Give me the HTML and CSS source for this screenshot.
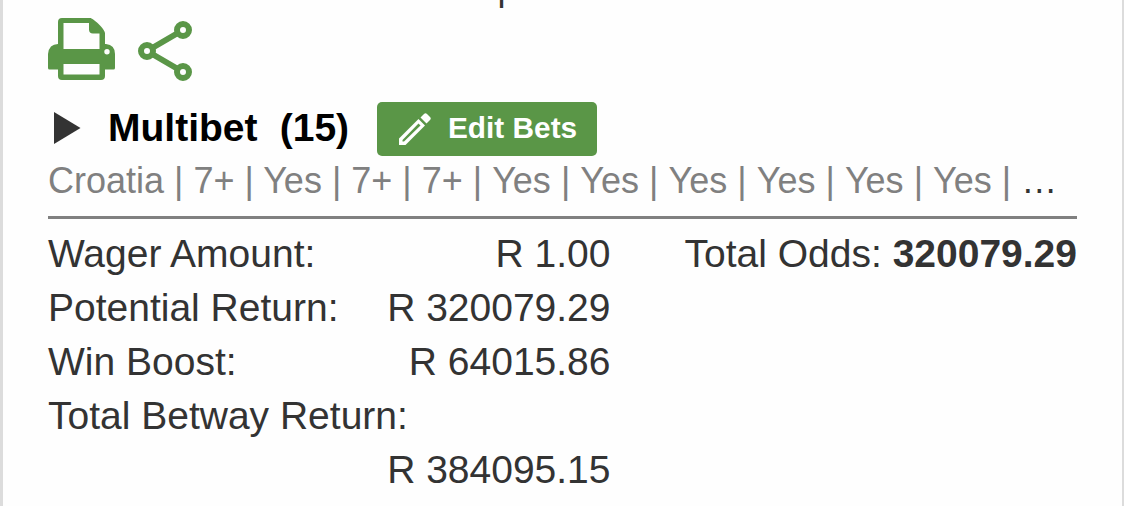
FILE: index.html
```html
<!DOCTYPE html>
<html lang="en">
<head>
    <meta charset="UTF-8">
    <meta name="viewport" content="width=device-width, initial-scale=1.0">
    <title>Bet Summary</title>
    <link rel="stylesheet" href="styles.css">
</head>
<body>
    <div class="bet-card">
        <div class="notice">Bonus on the next 15 Masterplan Win Boosted</div>

        <div class="actions">
            <svg class="print-icon" viewBox="0 0 67 62" width="67" height="62">
                <path fill="#5a9647" fill-rule="evenodd" d="M13 0H42C45 0 57 11 57 15V26H58Q67 27 67 36V50Q67 51.500 65.500 51.500H57V58Q57 62 53 62H14Q10 62 10 58V51.500H1.500Q0 51.500 0 50V36Q1 26 10 26V4Q10 0 14 0ZM15.500 5V31H51.500V15.500H45Q41 15.500 41 11.500V5ZM15.500 46V56.500H51.500V46ZM59 31A2.700 2.700 0 1 0 59 36.400A2.700 2.700 0 1 0 59 31Z"/>
            </svg>
            <svg class="share-icon" viewBox="0 0 54 60" width="54" height="60">
                <g fill="none" stroke="#5a9647" stroke-width="6">
                    <path d="M39 12.500L15 26.500M15 33.500L39 47.500"/>
                    <circle cx="45" cy="9" r="6"/>
                    <circle cx="9" cy="30" r="6"/>
                    <circle cx="45" cy="51" r="6"/>
                </g>
            </svg>
        </div>

        <div class="bet-header">
            <svg class="arrow" viewBox="0 0 27 32" width="27" height="32">
                <path fill="#333" d="M0 0L26.500 16L0 32Z"/>
            </svg>
            <h2>Multibet&nbsp; (15)</h2>
            <button class="edit-btn">
                <svg viewBox="0 0 32 32" width="32" height="32">
                    <path fill="#fff" fill-rule="evenodd" d="M0 25.500L19.500 6L26 12.500L6.500 32H0ZM3.500 27V28.500H5L21.500 12.500L19.500 10.500Z"/>
                    <path fill="#fff" d="M21.500 4.500L25 1Q26.500-.5 28 1L31 4Q32.500 5.500 31 7L27.500 10.500Z"/>
                </svg>
                <span>Edit Bets</span>
            </button>
        </div>

        <div class="selections">Croatia | 7+ | Yes | 7+ | 7+ | <span>Yes</span> | <span>Yes</span> | <span>Yes</span> | <span>Yes</span> | <span>Yes</span> | <span>Yes</span> | <span class="more">…</span></div>

        <div class="summary">
            <div class="amounts">
                <div class="row"><span>Wager Amount:</span><span>R 1.00</span></div>
                <div class="row"><span>Potential Return:</span><span>R 320079.29</span></div>
                <div class="row"><span>Win Boost:</span><span>R 64015.86</span></div>
                <div class="row"><span>Total Betway Return:</span><span>R 384095.15</span></div>
            </div>
            <div class="odds">Total Odds: <b>320079.29</b></div>
        </div>
    </div>
</body>
</html>
```
FILE: styles.css
```css
* {
    box-sizing: border-box;
}
body {
    margin: 0;
    height: 506px;
    overflow: hidden;
    background-color: #fefefe;
    font-family: "Liberation Sans", Arial, sans-serif;
    font-size: 39px;
    color: #333;
}
.bet-card {
    display: flow-root;
    height: 506px;
    padding: 0 45px;
    border-left: 3px solid #dcdcdc;
    border-right: 2px solid #dcdcdc;
}
/* last line of the notice, scrolled almost out of view */
.notice {
    height: 40px;
    margin-top: -32px;
    margin-bottom: 10px;
    line-height: 40px;
    font-size: 36px;
    letter-spacing: -0.4px;
    white-space: nowrap;
}
.actions {
    display: flex;
    align-items: flex-start;
    gap: 23px;
    height: 84px;
}
.share-icon {
    margin-top: 3px;
}
.bet-header {
    display: flex;
    align-items: center;
    height: 54px;
    padding-left: 6px;
}
.arrow {
    margin-bottom: 2px;
}
.bet-header h2 {
    width: 269px;
    margin: 0 0 0 27px;
    padding-bottom: 2px;
    font-size: 39px;
    line-height: 52px;
    word-spacing: 0.3px;
    color: #000;
    white-space: nowrap;
}
.edit-btn {
    display: flex;
    align-items: center;
    width: 220px;
    height: 54px;
    padding: 0 0 0 22px;
    border: none;
    border-radius: 5px;
    background-color: #5a9647;
    color: white;
    font-family: inherit;
    font-size: 29.8px;
    font-weight: bold;
}
.edit-btn span {
    margin-left: 17px;
    padding-bottom: 2px;
    white-space: nowrap;
}
.selections {
    height: 63px;
    line-height: 50px;
    border-bottom: 3px solid #808080;
    font-size: 36px;
    color: #808080;
    white-space: nowrap;
}
.selections span {
    margin-left: 0.1px;
}
.selections .more {
    margin-left: 0;
    color: #333;
}
.summary {
    display: flex;
    justify-content: space-between;
    padding-top: 8px;
    line-height: 54px;
    white-space: nowrap;
}
.amounts {
    width: 562.5px;
}
.row {
    display: flex;
    flex-wrap: wrap;
    justify-content: space-between;
}
.row span:last-child {
    margin-left: auto;
}
```
